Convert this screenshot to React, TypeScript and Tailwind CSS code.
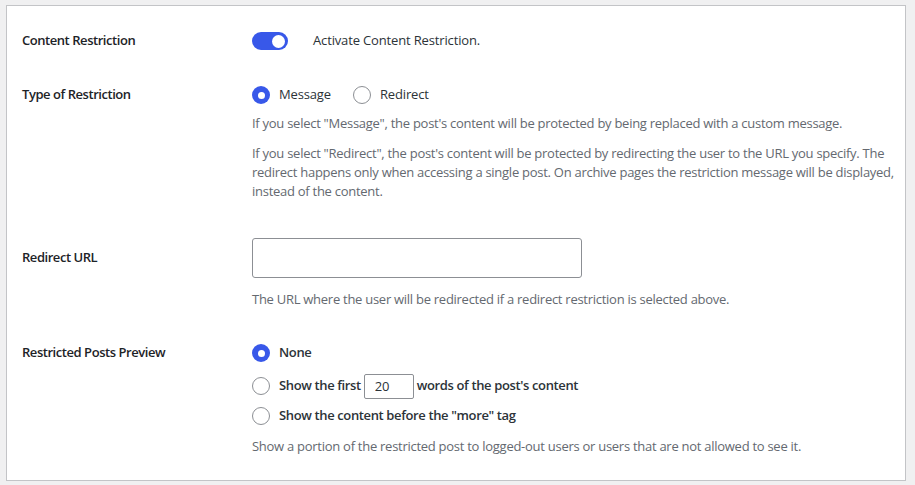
import React, { useState } from 'react';

const Radio = ({ checked }: { checked: boolean }) => (
  <span
    className={
      checked
        ? 'flex h-[18px] w-[18px] shrink-0 items-center justify-center rounded-full bg-[#3858e9]'
        : 'flex h-[18px] w-[18px] shrink-0 items-center justify-center rounded-full border border-[#8c8f94] bg-white'
    }
  >
    {checked && <span className="h-[7px] w-[7px] rounded-full bg-white" />}
  </span>
);

const Label = ({ children }: { children: React.ReactNode }) => (
  <div className="w-[230px] shrink-0 text-[13px] font-semibold tracking-[-0.45px] text-[#1d2327]">{children}</div>
);

const Desc = ({ children, className = '' }: { children: React.ReactNode; className?: string }) => (
  <p className={'text-[13px] leading-[19px] tracking-[-0.27px] text-[#646970] ' + className}>{children}</p>
);

const App = () => {
  const [words, setWords] = useState('20');

  return (
    <div
      className="min-h-[485px] w-[915px] bg-[#f0f0f1] pl-[6px] pt-[5px]"
      style={{ fontFamily: '"Open Sans", "Noto Sans", sans-serif' }}
    >
      <div className="h-[476px] w-[900px] border border-[#c3c4c7] bg-white pl-[15px] pt-[20px]">
        {/* Content Restriction */}
        <div className="flex h-[30px] items-center">
          <Label>Content Restriction</Label>
          <div className="flex items-center">
            <span className="flex h-[18px] w-[36px] items-center justify-end rounded-full bg-[#3858e9] pr-[3px]">
              <span className="h-[13px] w-[13px] rounded-full bg-white" />
            </span>
            <span className="ml-[25px] text-[13px] tracking-[-0.15px] text-[#2c3338]">Activate Content Restriction.</span>
          </div>
        </div>

        {/* Type of Restriction */}
        <div className="mt-[24px] flex">
          <div className="flex h-[30px] items-center">
            <Label>Type of Restriction</Label>
          </div>
          <div>
            <div className="flex h-[30px] items-center text-[13px] tracking-[-0.15px] text-[#2c3338]">
              <Radio checked />
              <span className="ml-[9px]">Message</span>
              <span className="ml-[22px]">
                <Radio checked={false} />
              </span>
              <span className="ml-[9px]">Redirect</span>
            </div>
            <Desc className="mt-[4px]">
              If you select "Message", the post's content will be protected by being replaced with a custom message.
            </Desc>
            <Desc className="mt-[11px] w-[650px]">
              If you select "Redirect", the post's content will be protected by redirecting the user to the URL you specify. The
              redirect happens only when accessing a single post. On archive pages the restriction message will be displayed,
              instead of the content.
            </Desc>
          </div>
        </div>

        {/* Redirect URL */}
        <div className="mt-[37px] flex">
          <div className="flex h-[40px] items-center">
            <Label>Redirect URL</Label>
          </div>
          <div>
            <input
              type="text"
              className="block h-[40px] w-[330px] rounded-[3px] border border-[#8c8f94] bg-white px-2 text-[13px] outline-none"
            />
            <Desc className="mt-[12px]">The URL where the user will be redirected if a redirect restriction is selected above.</Desc>
          </div>
        </div>

        {/* Restricted Posts Preview */}
        <div className="mt-[32px] flex">
          <div className="flex h-[24px] items-center">
            <Label>Restricted Posts Preview</Label>
          </div>
          <div className="text-[13px] font-semibold tracking-[-0.37px] text-[#2c3338]">
            <div className="flex h-[24px] items-center">
              <Radio checked />
              <span className="ml-[9px]">None</span>
            </div>
            <div className="mt-[8px] flex h-[26px] items-center">
              <Radio checked={false} />
              <span className="ml-[9px]">Show the first</span>
              <input
                value={words}
                onChange={(e) => setWords(e.target.value)}
                className="mx-[3px] h-[25px] w-[50px] rounded-[2px] border border-[#8c8f94] px-[10px] text-[13px] font-normal text-[#2c3338] outline-none"
              />
              <span>words of the post's content</span>
            </div>
            <div className="mt-[4px] flex h-[26px] items-center">
              <Radio checked={false} />
              <span className="ml-[9px]">Show the content before the "more" tag</span>
            </div>
            <Desc className="mt-[8px] font-normal">
              Show a portion of the restricted post to logged-out users or users that are not allowed to see it.
            </Desc>
          </div>
        </div>
      </div>
    </div>
  );
};

export default App;
